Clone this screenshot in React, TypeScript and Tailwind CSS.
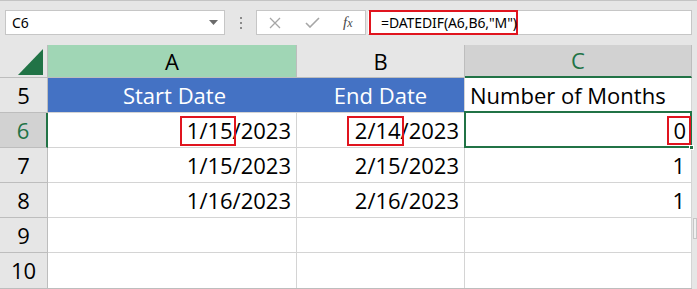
import React from "react";

const F = { fontFamily: '"Open Sans", "Liberation Sans", sans-serif' };

function RedBox({ className }: { className: string }) {
  return <span className={"pointer-events-none absolute border-2 border-[#e0141e] " + className} />;
}

export default function App() {
  const rowH = "border-b border-[#bdbdbd] border-r flex items-center justify-center text-[22px]";
  const cell = "border-b border-r border-[#d4d4d4] bg-white";
  return (
    <div className="w-[697px] h-[289px] overflow-hidden bg-[#e6e6e6] text-black" style={F}>
      {/* formula bar */}
      <div className="h-[45px] border-t border-[#c4c4c4] flex items-start pt-[9px]">
        <div className="ml-[5px] w-[220px] h-[25px] bg-white border border-[#c6c6c6] flex items-center justify-between pl-[6px] pr-[6px]">
          <span className="text-[14px] leading-none" style={{ fontFamily: '"Noto Sans", sans-serif' }}>C6</span>
          <svg width="9" height="5" viewBox="0 0 9 5"><path d="M0 0 H9 L4.5 5 Z" fill="#6b6b6b" /></svg>
        </div>
        <div className="w-[31px] h-[25px] flex flex-col items-center justify-center gap-[3px]">
          <span className="w-[2px] h-[2px] bg-[#8a8a8a]" />
          <span className="w-[2px] h-[2px] bg-[#8a8a8a]" />
          <span className="w-[2px] h-[2px] bg-[#8a8a8a]" />
        </div>
        <div className="w-[110px] h-[25px] bg-white border border-[#c6c6c6] flex items-center">
          <svg className="ml-[12px]" width="12" height="12" viewBox="0 0 12 12">
            <path d="M1 1 L11 11 M11 1 L1 11" stroke="#a6a6a6" strokeWidth="1.3" fill="none" />
          </svg>
          <svg className="ml-[24px]" width="15" height="11" viewBox="0 0 15 11">
            <path d="M1 6 L5 10 L14 1" stroke="#a6a6a6" strokeWidth="1.6" fill="none" />
          </svg>
          <span
            className="ml-[23px] text-[15px] italic text-[#4a4a4a] leading-none"
            style={{ fontFamily: '"Liberation Serif", serif' }}
          >
            f<span className="text-[12px]">x</span>
          </span>
        </div>
        <div className="ml-[2px] flex-1 mr-[5px] h-[25px] bg-white border-y border-r border-[#c6c6c6] relative">
          <div className="absolute left-[1px] -top-px w-[149px] h-[25px] border-2 border-[#e0141e] flex items-center pl-[10px]">
            <span className="text-[14px] leading-none whitespace-nowrap tracking-[-0.1px]" style={{ fontFamily: '"Noto Sans", sans-serif' }}>
              =DATEDIF(A6,B6,"M")
            </span>
          </div>
        </div>
      </div>

      {/* sheet */}
      <div className="flex">
        <div className="grid grid-cols-[48px_249px_168px_227px] grid-rows-[33px_repeat(6,35px)] w-[692px] border-b border-[#bdbdbd]">
          {/* header row */}
          <div className="border-b border-r border-[#bdbdbd] bg-[#e6e6e6] relative">
            <svg className="absolute left-0 top-0" width="48" height="33" viewBox="0 0 48 33">
              <path d="M43 4 L43 30 L18 30 Z" fill="#217346" />
            </svg>
          </div>
          <div className="border-b border-r border-[#bdbdbd] bg-[#a0d6b5] flex items-center justify-center text-[22px]">A</div>
          <div className="border-b border-r border-[#bdbdbd] bg-[#e6e6e6] flex items-center justify-center text-[22px]">B</div>
          <div className="border-b-2 border-b-[#217346] border-r border-r-[#bdbdbd] bg-[#d2d2d2] flex items-center justify-center text-[22px] text-[#217346]">C</div>

          {/* row 5 */}
          <div className={rowH + " bg-[#e6e6e6] border-[#bdbdbd]"}>5</div>
          <div className="bg-[#4472c4] border-b border-[#d4d4d4] flex items-center justify-center text-[22px] text-white pl-[4px]">Start Date</div>
          <div className="bg-[#4472c4] border-b border-r border-[#d4d4d4] flex items-center justify-center text-[22px] text-white">End Date</div>
          <div className={cell + " flex items-center pl-[5px] text-[22px] whitespace-nowrap"}>Number of Months</div>

          {/* row 6 */}
          <div className="border-b border-b-[#bdbdbd] border-r-2 border-r-[#217346] bg-[#d2d2d2] flex items-center justify-center text-[22px] text-[#217346]">6</div>
          <div className={cell + " flex justify-end items-stretch pr-[5px] text-[22px]"}>
            <span className="relative flex items-center">
              1/15
              <RedBox className="top-[3px] bottom-[1px] -left-[7px] -right-[3px]" />
            </span>
            <span className="flex items-center">/2023</span>
          </div>
          <div className={cell + " flex justify-end items-stretch pr-[5px] text-[22px]"}>
            <span className="relative flex items-center">
              2/14
              <RedBox className="top-[3px] bottom-[1px] -left-[8px] -right-[3px]" />
            </span>
            <span className="flex items-center">/2023</span>
          </div>
          <div className="relative bg-white border-b border-[#d4d4d4] flex justify-end items-stretch pr-[6px] text-[22px]">
            <span className="pointer-events-none absolute -left-px -top-[2px] right-0 -bottom-px border-2 border-[#217346]" />
            <span className="absolute -right-[2px] -bottom-[3px] w-[5px] h-[5px] bg-[#217346] border border-white" />
            <span className="relative flex items-center">
              0
              <RedBox className="top-[3px] bottom-[2px] -left-[6px] -right-[5px]" />
            </span>
          </div>

          {/* row 7 */}
          <div className={rowH + " bg-[#e6e6e6] border-[#bdbdbd]"}>7</div>
          <div className={cell + " flex items-center justify-end pr-[5px] text-[22px]"}>1/15/2023</div>
          <div className={cell + " flex items-center justify-end pr-[5px] text-[22px]"}>2/15/2023</div>
          <div className={cell + " flex items-center justify-end pr-[6px] text-[22px]"}>1</div>

          {/* row 8 */}
          <div className={rowH + " bg-[#e6e6e6] border-[#bdbdbd]"}>8</div>
          <div className={cell + " flex items-center justify-end pr-[5px] text-[22px]"}>1/16/2023</div>
          <div className={cell + " flex items-center justify-end pr-[5px] text-[22px]"}>2/16/2023</div>
          <div className={cell + " flex items-center justify-end pr-[6px] text-[22px]"}>1</div>

          {/* row 9 */}
          <div className={rowH + " bg-[#e6e6e6] border-[#bdbdbd]"}>9</div>
          <div className={cell} />
          <div className={cell} />
          <div className={cell} />

          {/* row 10 */}
          <div className={rowH + " bg-[#e6e6e6] border-[#bdbdbd] border-b-0"}>10</div>
          <div className={cell + " border-b-0"} />
          <div className={cell + " border-b-0"} />
          <div className={cell + " border-b-0"} />
        </div>
        <div className="w-[5px] relative">
          <div className="absolute left-[1px] top-[173px] w-[4px] h-[21px] border border-[#c6c6c6] bg-[#f0f0f0]" />
        </div>
      </div>
    </div>
  );
}
